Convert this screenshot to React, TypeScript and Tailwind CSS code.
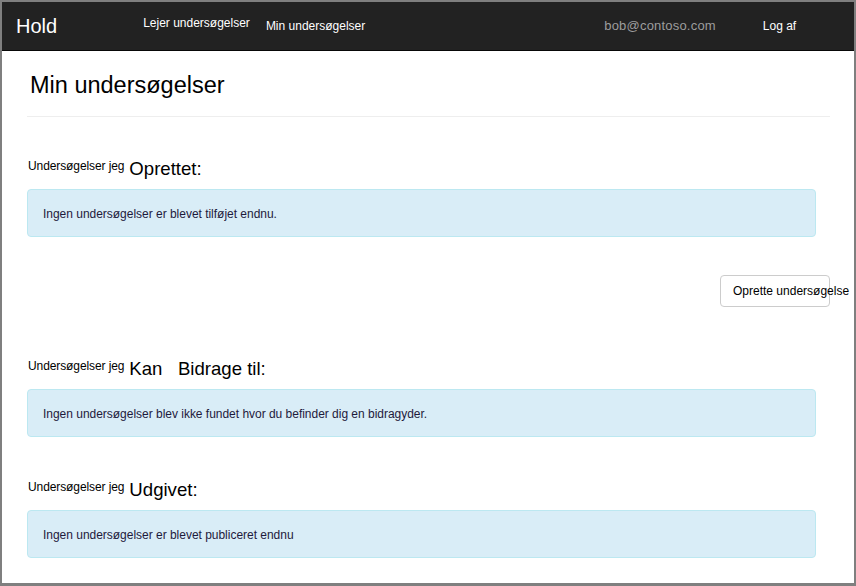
const FONT = { fontFamily: '"Liberation Sans", Arial, sans-serif' };

const SECTIONS = [
  { word: "Oprettet:", msg: "Ingen undersøgelser er blevet tilføjet endnu." },
  { word: "Kan\u00a0\u00a0\u00a0Bidrage til:", msg: "Ingen undersøgelser blev ikke fundet hvor du befinder dig en bidragyder." },
  { word: "Udgivet:", msg: "Ingen undersøgelser er blevet publiceret endnu" },
];

function Section({ word, msg, className }: { word: string; msg: string; className?: string }) {
  return (
    <section className={className}>
      <div className="flex items-end pl-[1px]">
        <span className="text-[12px] tracking-[-0.1px] text-black leading-none mb-[8px]">Undersøgelser jeg</span>
        <span className="ml-[5px] text-[18.6px] text-black leading-none mb-[1px]">{word}</span>
      </div>
      <div className="mt-[9px] mr-[14px] h-[48px] rounded-[4px] border border-[#bce8f1] bg-[#d9edf7] pl-[15px] pt-[2px] flex items-center">
        <span className="text-[12px] tracking-[-0.02px] text-[#1e1a3c]">{msg}</span>
      </div>
    </section>
  );
}

export default function App() {
  return (
    <div
      className="w-[856px] h-[586px] overflow-hidden bg-white border-[#7f7f7f] border-l-2 border-t-2 border-r-2 border-b-[3px]"
      style={FONT}
    >
      <nav className="h-[49px] bg-[#222222] border-b border-[#080808] flex items-center text-white">
        <span className="ml-[14px] text-[20px] leading-none">Hold</span>
        <span className="ml-[86px] -mt-[7px] text-[12px]">Lejer undersøgelser</span>
        <span className="ml-[16px] mt-[0px] text-[12px]">Min undersøgelser</span>
        <span className="ml-[239px] text-[13px] tracking-[0.2px] text-[#9d9d9d]">bob@contoso.com</span>
        <span className="ml-[47px] text-[12px]">Log af</span>
      </nav>
      <main className="pl-[25px] pr-[24px]">
        <h1 className="pt-[20px] pl-[3px] text-[23.5px] leading-[28px] text-black">Min undersøgelser</h1>
        <hr className="mt-[17px] border-t border-[#eeeeee]" />
        <Section className="mt-[43px]" {...SECTIONS[0]} />
        <div className="mt-[38px] flex justify-end">
          <button className="w-[110px] h-[32px] rounded-[4px] border border-[#cccccc] bg-white text-left pl-[12px] text-[12px] text-black whitespace-nowrap overflow-visible">
            Oprette undersøgelse
          </button>
        </div>
        <Section className="mt-[53px]" {...SECTIONS[1]} />
        <Section className="mt-[44px]" {...SECTIONS[2]} />
      </main>
    </div>
  );
}
